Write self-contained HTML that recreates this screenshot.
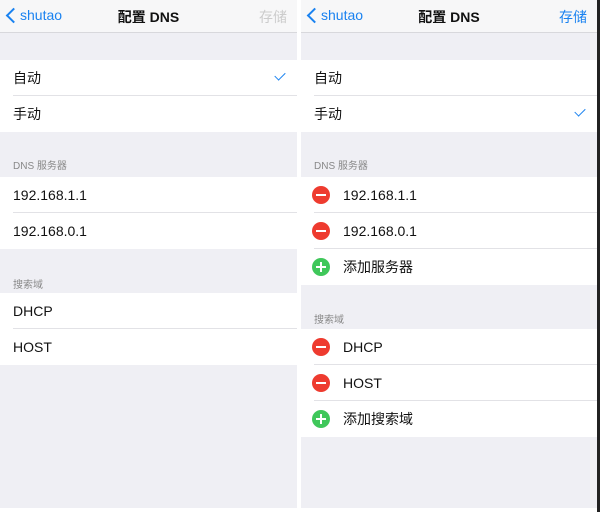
<!DOCTYPE html>
<html><head><meta charset="utf-8"><style>
*{margin:0;padding:0;box-sizing:border-box}
body{width:600px;height:512px;background:#fff;font-family:"Liberation Sans","Noto Sans CJK SC",sans-serif;position:relative;overflow:hidden}
.p{position:absolute;top:0;height:508px;background:#efeff4}
.nav{position:absolute;left:0;right:0;top:0;height:33px;background:#f7f7f8;border-bottom:1px solid #d8d8dc}
.nav .b{position:absolute;left:20px;top:7px;font-size:14px;color:#1a82f0}
.nav .t{position:absolute;left:0;right:0;text-align:center;top:7px;font-size:14px;font-weight:bold;color:#111}
.nav .s{position:absolute;right:10px;top:7px;font-size:14px}
.chev{position:absolute;left:8px;top:10px;width:11px;height:11px;border-left:2.5px solid #1a82f0;border-bottom:2.5px solid #1a82f0;transform:rotate(45deg);transform-origin:center}
.r{position:absolute;left:0;right:0;height:36px;background:#fff;font-size:14px;color:#111;line-height:36px}
.r span{position:absolute;left:13px}
.r.i span{left:42px}
.r.l:after{content:"";position:absolute;left:13px;right:0;bottom:0;height:1px;background:#e2e2e6}
.h{position:absolute;left:13px;font-size:10px;color:#888}
.ck{position:absolute;right:12px;top:12px;width:10px;height:6px;border-left:1.6px solid #1a82f0;border-bottom:1.6px solid #1a82f0;transform:rotate(-45deg)}
.ic{position:absolute;left:11px;top:9px;width:18px;height:18px;border-radius:50%}
.m{background:#ee3b2f}.m:after{content:"";position:absolute;left:4px;right:4px;top:8px;height:2px;background:#fff}
.a{background:#3fc75a}.a:after{content:"";position:absolute;left:4px;right:4px;top:8px;height:2px;background:#fff}.a:before{content:"";position:absolute;top:4px;bottom:4px;left:8px;width:2px;background:#fff}
</style></head><body>
<div class="p" style="left:0;width:297px">
 <div class="nav"><div class="chev"></div><div class="b">shutao</div><div class="t">配置 DNS</div><div class="s" style="color:#ccc">存储</div></div>
 <div class="r l" style="top:60px"><span>自动</span><div class="ck"></div></div>
 <div class="r" style="top:96px"><span>手动</span></div>
 <div class="h" style="top:157px">DNS 服务器</div>
 <div class="r l" style="top:177px"><span>192.168.1.1</span></div>
 <div class="r" style="top:213px"><span>192.168.0.1</span></div>
 <div class="h" style="top:276px">搜索域</div>
 <div class="r l" style="top:293px"><span>DHCP</span></div>
 <div class="r" style="top:329px"><span>HOST</span></div>
</div>
<div class="p" style="left:301px;width:296px">
 <div class="nav"><div class="chev"></div><div class="b">shutao</div><div class="t">配置 DNS</div><div class="s" style="color:#1a82f0">存储</div></div>
 <div class="r l" style="top:60px"><span>自动</span></div>
 <div class="r" style="top:96px"><span>手动</span><div class="ck"></div></div>
 <div class="h" style="top:157px">DNS 服务器</div>
 <div class="r i l" style="top:177px"><div class="ic m"></div><span>192.168.1.1</span></div>
 <div class="r i l" style="top:213px"><div class="ic m"></div><span>192.168.0.1</span></div>
 <div class="r i" style="top:249px"><div class="ic a"></div><span>添加服务器</span></div>
 <div class="h" style="top:311px">搜索域</div>
 <div class="r i l" style="top:329px"><div class="ic m"></div><span>DHCP</span></div>
 <div class="r i l" style="top:365px"><div class="ic m"></div><span>HOST</span></div>
 <div class="r i" style="top:401px"><div class="ic a"></div><span>添加搜索域</span></div>
</div>
<div style="position:absolute;left:597px;top:0;width:3px;height:512px;background:#222"></div>
</body></html>
